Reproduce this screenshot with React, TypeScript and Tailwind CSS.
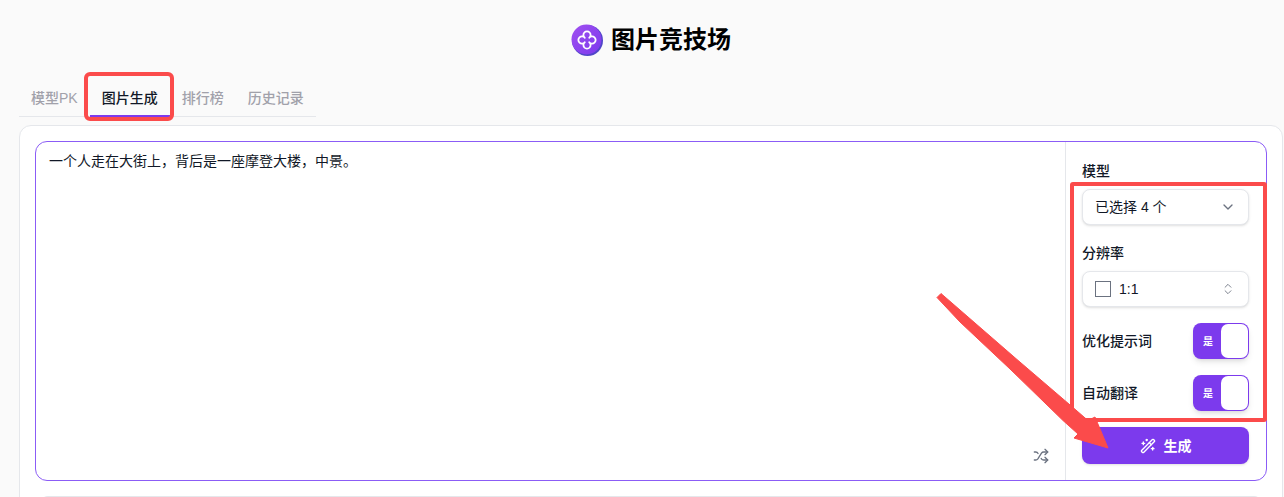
import React from 'react';
import { ChevronDown, ChevronsUpDown, Shuffle, WandSparkles } from 'lucide-react';

const tabs = [
  { id: 'pk', label: '模型PK' },
  { id: 'image', label: '图片生成' },
  { id: 'rank', label: '排行榜' },
  { id: 'history', label: '历史记录' },
];

const Logo = () => (
  <svg width="32" height="32" viewBox="0 0 32 32" fill="none">
    <defs>
      <linearGradient id="logo-fill" x1="0" y1="0" x2="1" y2="1">
        <stop offset="0" stopColor="#a04ff0" />
        <stop offset="1" stopColor="#7c3aed" />
      </linearGradient>
    </defs>
    <circle cx="16.500" cy="16.500" r="15.500" fill="#5046c8" />
    <circle cx="15.500" cy="15.500" r="15" fill="url(#logo-fill)" />
    <path
      d="M13.800 13.800a3.600 3.600 0 1 1 4.400 0a3.600 3.600 0 1 1 0 4.400a3.600 3.600 0 1 1-4.400 0a3.600 3.600 0 1 1 0-4.400Z"
      stroke="#fff"
      strokeWidth="1.800"
      strokeLinejoin="round"
    />
  </svg>
);

const Toggle = ({ label }: { label: string }) => (
  <div className="flex items-center justify-between">
    <span className="text-sm font-medium text-[#111827]">{label}</span>
    <div className="flex h-9 w-14 items-center justify-between rounded-lg bg-[#7c3aed] p-px pl-2.5 shadow-md">
      <span className="text-[10px] font-bold text-white">是</span>
      <div className="h-[34px] w-[27px] rounded-[7px] bg-white" />
    </div>
  </div>
);

export default function App() {
  return (
    <div
      className="relative h-[497px] overflow-hidden bg-[#fafafa] pl-[19px] pr-px text-[#111827]"
      style={{ fontFamily: '"Liberation Sans", "Noto Sans CJK SC", sans-serif' }}
    >
      {/* Title */}
      <div className="flex h-[78px] items-center justify-center gap-2 pt-px">
        <Logo />
        <h1 className="text-2xl font-bold text-black">图片竞技场</h1>
      </div>

      {/* Tabs */}
      <div className="flex h-[39px] w-fit border-b border-[#e5e7eb]">
        {tabs.map((tab) => (
          <button
            key={tab.id}
            className={`-mb-px flex h-[39px] items-center border-b-2 px-3 pt-0.5 text-sm font-medium ${
              tab.id === 'image' ? 'border-[#7c3aed] text-[#111827]' : 'border-transparent text-[#a1a1aa]'
            }`}
          >
            {tab.label}
          </button>
        ))}
      </div>

      {/* Main card */}
      <div className="mt-2 rounded-t-xl border border-[#e5e7eb] bg-white p-[15px] pb-0">
        <div className="flex h-[340px] rounded-xl border border-[#8b5cf6]">
          <div className="flex flex-1 flex-col justify-between px-[13px] pb-4 pt-[9px]">
            <p className="text-sm leading-5 text-[#111827]">一个人走在大街上，背后是一座摩登大楼，中景。</p>
            <div className="flex justify-end pr-[3px]">
              <Shuffle size={16} className="text-[#6b7280]" />
            </div>
          </div>

          <div className="flex w-[201px] flex-col border-l border-[#e5e7eb] pl-4 pr-[17px] pt-[19px]">
            <label className="mb-2 text-sm font-medium leading-5">模型</label>
            <div className="flex h-9 items-center justify-between rounded-lg border border-[#e5e7eb] bg-white pl-3 pr-3 text-sm shadow-sm">
              <span>已选择 4 个</span>
              <ChevronDown size={16} className="text-[#6b7280]" />
            </div>

            <label className="mb-2 mt-[18px] text-sm font-medium leading-5">分辨率</label>
            <div className="flex h-9 items-center justify-between rounded-lg border border-[#e5e7eb] bg-white pl-3 pr-[13px] text-sm shadow-sm">
              <span className="flex items-center gap-2">
                <span className="h-4 w-4 border border-[#6b7280]" />
                1:1
              </span>
              <ChevronsUpDown size={14} strokeWidth={1.5} className="text-[#6b7280]" />
            </div>

            <div className="mt-4 flex flex-col gap-4">
              <Toggle label="优化提示词" />
              <Toggle label="自动翻译" />
            </div>

            <button className="mt-4 flex h-[37px] items-center justify-center gap-2 rounded-lg bg-[#7c3aed] text-sm font-semibold text-white shadow-sm">
              <WandSparkles size={16} />
              生成
            </button>
          </div>
        </div>
        <div className="mx-[5px] mt-[15px] h-10 rounded-t-lg border-t border-[#e5e7eb]" />
      </div>

      {/* Annotations */}
      <div className="absolute left-[84px] top-[72px] h-[49px] w-[90px] rounded-[6px] border-4 border-[#fb4b4b]" />
      <div className="absolute left-[1070px] top-[182px] h-[240px] w-[197px] rounded-[3px] border-4 border-[#fb4b4b]" />
      <svg className="absolute left-0 top-0" width="1284" height="497" fill="none">
        <path
          d="M937 297.500L941 293.500L1017 359.500L1073 407.500L1088 420.500L1095 417L1108 448L1074 438L1078 434L1063 420.500L1010 369L960 322Z"
          fill="#fb4b4b"
          stroke="#fb4b4b"
          strokeWidth="1"
          strokeLinejoin="round"
        />
      </svg>
    </div>
  );
}
